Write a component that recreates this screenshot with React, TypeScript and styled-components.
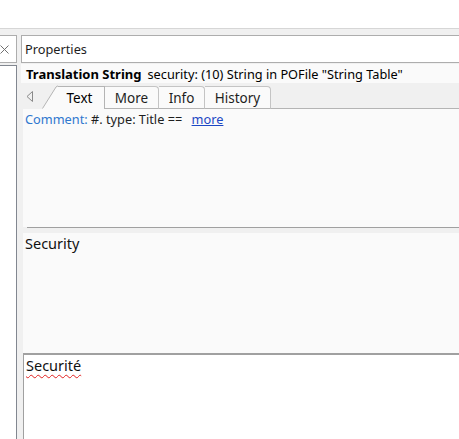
import styled, { createGlobalStyle } from 'styled-components'

const GlobalStyle = createGlobalStyle`
  html, body {
    margin: 0;
    padding: 0;
    background: #ffffff;
  }
  body {
    font-family: 'Noto Sans', 'Open Sans', sans-serif;
    font-size: 12.75px;
    color: #000;
  }
`

const tabs = [
  { label: 'More', w: 54 },
  { label: 'Info', w: 46 },
  { label: 'History', w: 66 },
]

export default function App() {
  return (
    <>
      <GlobalStyle />
      <Window>
        <TopBlank />
        <Workspace>
          <LeftPane>
            <PaneHeader>
              <svg width="9" height="9" viewBox="0 0 9 9">
                <path d="M0.5 0.5 L8.5 8.5 M8.5 0.5 L0.5 8.5" stroke="#707070" strokeWidth="1" />
              </svg>
            </PaneHeader>
            <PaneBody />
          </LeftPane>
          <RightPane>
            <PropsHeader>Properties</PropsHeader>
            <TitleRow>
              <b>Translation String</b>
              <span>security: (10) String in POFile "String Table"</span>
            </TitleRow>
            <TabStrip>
              <ScrollArrow>
                <svg width="8" height="11" viewBox="0 0 8 11">
                  <path d="M6.5 0.5 L1 5.5 L6.5 10.5 Z" fill="none" stroke="#8a8a8a" />
                </svg>
              </ScrollArrow>
              <SlantEdge>
                <svg width="16" height="26" viewBox="0 0 16 26">
                  <path d="M0 26 L14 4 Q15 3 16 3 L16 26 Z" fill="#fafafa" />
                  <path d="M0.5 25.5 L14 4 Q15 3 16 3" fill="none" stroke="#b4b4b4" />
                </svg>
              </SlantEdge>
              <ActiveTab>Text</ActiveTab>
              {tabs.map((t) => (
                <Tab key={t.label} $w={t.w}>
                  {t.label}
                </Tab>
              ))}
              <TabFiller />
            </TabStrip>
            <CommentArea>
              <CommentLine>
                <CommentLabel>Comment:</CommentLabel> #. type: Title =={' '}
                <MoreLink>more</MoreLink>
              </CommentLine>
            </CommentArea>
            <Splitter />
            <SourceArea>Security</SourceArea>
            <TargetBox>
              <Misspelled>Securité</Misspelled>
            </TargetBox>
          </RightPane>
        </Workspace>
      </Window>
    </>
  )
}

const Window = styled.div`
  width: 459px;
  height: 439px;
  display: flex;
  flex-direction: column;
  overflow: hidden;
`

const TopBlank = styled.div`
  height: 28px;
  background: #ffffff;
`

const Workspace = styled.div`
  flex: 1;
  display: flex;
  gap: 4px;
  padding-top: 6px;
  background: #f0f0f0;
  border-top: 1px solid #d6d6d6;
  min-height: 0;
`

const LeftPane = styled.div`
  width: 17px;
  display: flex;
  flex-direction: column;
  gap: 2px;
`

const PaneHeader = styled.div`
  height: 28px;
  box-sizing: border-box;
  background: #ffffff;
  border: 1px solid #adadad;
  border-left: none;
  display: flex;
  align-items: center;

  svg {
    display: block;
  }
`

const PaneBody = styled.div`
  flex: 1;
  background: #ffffff;
  border-right: 1px solid #828790;
  border-top: 1px solid #828790;
`

const RightPane = styled.div`
  flex: 1;
  display: flex;
  flex-direction: column;
  min-width: 0;
`

const PropsHeader = styled.div`
  height: 28px;
  box-sizing: border-box;
  background: #ffffff;
  border: 1px solid #adadad;
  border-right: none;
  padding-left: 3px;
  display: flex;
  align-items: center;
  color: #1e1e1e;
`

const TitleRow = styled.div`
  height: 19px;
  margin-top: 1px;
  background: #fafafa;
  padding-left: 5px;
  display: flex;
  align-items: center;
  gap: 6px;
  white-space: nowrap;

  b {
    font-weight: 700;
    font-size: 13px;
  }
`

const TabStrip = styled.div`
  height: 26px;
  display: flex;
  align-items: flex-end;
  background: #f0f0f0;
`

const ScrollArrow = styled.div`
  width: 21px;
  height: 26px;
  display: flex;
  align-items: center;
  padding-left: 5px;
  box-sizing: border-box;
`

const SlantEdge = styled.div`
  width: 16px;
  height: 26px;

  svg {
    display: block;
  }
`

const ActiveTab = styled.div`
  width: 47px;
  height: 23px;
  box-sizing: border-box;
  background: #fafafa;
  border-top: 1px solid #b4b4b4;
  border-right: 1px solid #b4b4b4;
  display: flex;
  align-items: center;
  justify-content: center;
  font-size: 13.5px;
  padding-right: 3px;
`

const Tab = styled.div<{ $w: number }>`
  width: ${({ $w }) => $w}px;
  height: 23px;
  box-sizing: border-box;
  background: #fafafa;
  border-top: 1px solid #c4c4c4;
  border-right: 1px solid #c4c4c4;
  border-bottom: 1px solid #b4b4b4;
  border-top-right-radius: 4px;
  display: flex;
  align-items: center;
  justify-content: center;
  font-size: 13.5px;
  color: #1e1e1e;
`

const TabFiller = styled.div`
  flex: 1;
  border-bottom: 1px solid #b4b4b4;
`

const CommentArea = styled.div`
  height: 118px;
  margin-left: 2px;
  background: #fafafa;
  padding: 1px 0 0 2px;
  box-sizing: border-box;
`

const CommentLine = styled.div`
  white-space: pre;
  color: #1e1e1e;
`

const CommentLabel = styled.span`
  color: #2f78cf;
`

const MoreLink = styled.span`
  color: #1c47c4;
  text-decoration: underline;
  margin-left: 6px;
`

const Splitter = styled.div`
  height: 5px;
  margin-left: 6px;
  border-top: 1px solid #a0a0a0;
  background: #f0f0f0;
`

const SourceArea = styled.div`
  height: 120px;
  margin-left: 2px;
  background: #fafafa;
  padding: 0 0 0 2px;
  box-sizing: border-box;
  font-size: 14.5px;
  color: #111;
`

const TargetBox = styled.div`
  flex: 1;
  margin-left: 2px;
  background: #ffffff;
  border-top: 2px solid #a0a0a0;
  border-left: 1px solid #a0a0a0;
  padding: 0 0 0 2px;
  font-size: 14.5px;
  color: #111;
`

const Misspelled = styled.span`
  text-decoration: underline wavy #e02020;
  text-decoration-thickness: 1px;
  text-underline-offset: 3px;
`
